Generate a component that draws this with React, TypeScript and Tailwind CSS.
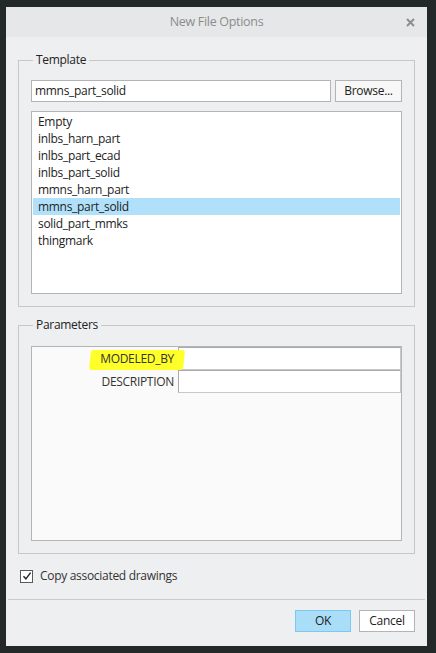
import React from "react";

const templates = [
  "Empty",
  "inlbs_harn_part",
  "inlbs_part_ecad",
  "inlbs_part_solid",
  "mmns_harn_part",
  "mmns_part_solid",
  "solid_part_mmks",
  "thingmark",
];

const params = ["MODELED_BY", "DESCRIPTION"];

function CheckBox() {
  return (
    <span className="flex h-[13px] w-[13px] items-center justify-center border border-[#5a5a5a] bg-white">
      <svg width="10" height="10" viewBox="0 0 10 10">
        <path d="M1.5 5.2 L3.9 7.8 L8.6 1.6" fill="none" stroke="#222" strokeWidth="1.4" />
      </svg>
    </span>
  );
}

export default function App() {
  return (
    <div
      className="h-[653px] w-[436px] bg-[#232829] pl-[6px] pt-[7px] text-[12px] tracking-[-0.3px] text-[#333]"
      style={{ fontFamily: '"Open Sans", "Noto Sans", sans-serif' }}
    >
      <div className="flex h-[639px] w-[421px] flex-col bg-[#eeeff0]">
        {/* title bar */}
        <div className="relative flex h-[30px] items-center justify-center bg-[#e6e7e8] text-[12.5px] text-[#8c8c8c]">
          New File Options
          <svg className="absolute right-[12px] top-[11px]" width="9" height="9" viewBox="0 0 9 9">
            <path d="M1 1 L8 8 M8 1 L1 8" stroke="#8e8e8e" strokeWidth="2" />
          </svg>
        </div>

        <div className="flex flex-1 flex-col px-[12px]">
          {/* template group */}
          <fieldset className="mt-[15px] border border-[#c6c7c8] px-[12px] pb-[12px] pt-[12px]">
            <legend className="ml-[2px] px-[3px] leading-[16px] text-[#222]">Template</legend>
            <div className="flex gap-[4px]">
              <div className="flex h-[22px] w-[300px] items-center border border-[#b4b4b4] bg-white px-[3px] text-[#222]">
                mmns_part_solid
              </div>
              <button className="h-[22px] w-[67px] border border-[#b4b4b4] bg-[#f7f7f7] text-[#222]">
                Browse...
              </button>
            </div>
            <div className="mt-[9px] h-[183px] w-[371px] border border-[#b4b4b4] bg-white p-[1px]">
              {templates.map((t) => (
                <div
                  key={t}
                  className={
                    "flex h-[17px] items-center px-[5px] text-[#222] " +
                    (t === "mmns_part_solid" ? "bg-[#b1e1fa]" : "")
                  }
                >
                  {t}
                </div>
              ))}
            </div>
          </fieldset>

          {/* parameters group */}
          <fieldset className="mt-[10px] border border-[#c6c7c8] px-[12px] pb-[12px] pt-[13px]">
            <legend className="ml-[2px] px-[3px] leading-[16px] text-[#222]">Parameters</legend>
            <div className="h-[195px] w-[371px] border border-[#b4b4b4] bg-[#fafafa]">
              {params.map((p) => (
                <div key={p} className="flex h-[23px]">
                  <div className="relative flex w-[146px] items-center justify-end pr-[4px] text-[#333]">
                    {p === "MODELED_BY" && (
                      <span className="absolute left-[58px] top-[3px] h-[20px] w-[94px] -skew-x-6 rounded-[3px] bg-[#ffff2a]" />
                    )}
                    <span className="relative">{p}</span>
                  </div>
                  <div className="w-[223px] border border-[#a9a9a9] border-b-[#c9c9c9] border-r-[#c9c9c9] bg-white" />
                </div>
              ))}
            </div>
          </fieldset>

          {/* option */}
          <label className="mt-[13px] flex items-center gap-[7px] pl-[2px] text-[#333]">
            <CheckBox />
            Copy associated drawings
          </label>
        </div>

        {/* footer */}
        <div className="mx-[2px] mt-auto border-t border-[#c9cacb]" />
        <div className="flex h-[46px] items-start justify-end gap-[8px] pr-[12px] pt-[10px]">
          <button className="h-[22px] w-[56px] border border-[#7cc8ef] bg-[#a9ddf8] text-[#222]">OK</button>
          <button className="h-[22px] w-[56px] border border-[#b4b4b4] bg-white text-[#222]">Cancel</button>
        </div>
      </div>
    </div>
  );
}
